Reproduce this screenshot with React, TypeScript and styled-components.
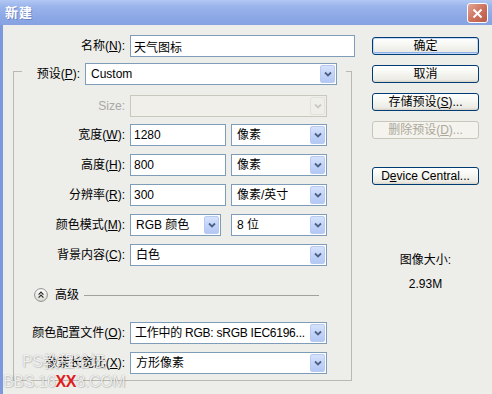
import React from "react";
import styled, { createGlobalStyle, css } from "styled-components";

const FONT = `"Liberation Sans", "Noto Sans CJK SC", sans-serif`;
const BG = "#EDEDEA";

const GlobalStyle = createGlobalStyle`
  html, body { margin: 0; padding: 0; background: ${BG}; }
  body { font-family: ${FONT}; font-size: 12px; color: #000; }
  * { box-sizing: border-box; }
`;

const Window = styled.div`
  position: relative;
  width: 492px;
  height: 394px;
  display: flex;
  flex-direction: column;
  background: #7D99DE;
  overflow: hidden;
`;

const TitleBar = styled.div`
  height: 25px;
  flex: none;
  display: flex;
  align-items: center;
  justify-content: space-between;
  padding: 0 4px 0 5px;
  background: linear-gradient(180deg, #B2C7F3 0%, #9BB5EC 25%, #8DA8E5 65%, #87A2E2 100%);
`;

const Title = styled.span`
  color: #fff;
  font-weight: bold;
  font-size: 13px;
  line-height: 16px;
  letter-spacing: 1px;
  text-shadow: 1px 1px 0 rgba(60, 80, 140, 0.4);
`;

const CloseButton = styled.div`
  width: 21px;
  height: 20px;
  margin-top: 1px;
  border: 1px solid #fff;
  border-radius: 3px;
  background: linear-gradient(135deg, #E3A595 0%, #CC6F5D 55%, #B95A48 100%);
  display: flex;
  align-items: center;
  justify-content: center;
`;

const Frame = styled.div`
  flex: 1;
  display: flex;
  margin-left: 3px;
  background: ${BG};
`;

const Main = styled.div`
  width: 352px;
  flex: none;
  display: flex;
  flex-direction: column;
  padding-top: 10px;
`;

const Row = styled.div<{ $mt?: number }>`
  display: flex;
  align-items: center;
  gap: 5px;
  height: 22px;
  flex: none;
  margin-top: ${(p) => p.$mt ?? 0}px;
`;

const Label = styled.label<{ $w: number; $disabled?: boolean }>`
  width: ${(p) => p.$w}px;
  flex: none;
  text-align: right;
  white-space: nowrap;
  line-height: 14px;
  color: ${(p) => (p.$disabled ? "#A9A8A2" : "#000")};
`;

const U = styled.span`
  text-decoration: underline;
`;

const TextBox = styled.input<{ $w: number }>`
  width: ${(p) => p.$w}px;
  height: 22px;
  flex: none;
  border: 1px solid #7F9DB9;
  background: #fff;
  padding: 0 3px;
  margin: 0;
  font-family: ${FONT};
  font-size: 12px;
  color: #000;
  outline: none;
`;

const Combo = styled.div<{ $w: number; $disabled?: boolean; $ml?: number }>`
  width: ${(p) => p.$w}px;
  height: 22px;
  flex: none;
  margin-left: ${(p) => p.$ml ?? 0}px;
  display: flex;
  align-items: stretch;
  border: 1px solid ${(p) => (p.$disabled ? "#C9C8BF" : "#7F9DB9")};
  background: ${(p) => (p.$disabled ? "#F0EFEA" : "#fff")};
`;

const ComboText = styled.span<{ $tight?: boolean }>`
  flex: 1;
  min-width: 0;
  padding-left: ${(p) => (p.$tight ? 4 : 5)}px;
  display: flex;
  align-items: center;
  white-space: nowrap;
  overflow: hidden;
  line-height: 14px;
  letter-spacing: ${(p) => (p.$tight ? "-0.25px" : "0")};
`;

const ArrowButton = styled.span<{ $disabled?: boolean }>`
  width: 15px;
  flex: none;
  margin: 1px;
  border-radius: 2px;
  display: flex;
  align-items: center;
  justify-content: center;
  ${(p) =>
    p.$disabled
      ? css`
          background: #EFEFEA;
          border: 1px solid #E2E1DA;
        `
      : css`
          background: linear-gradient(180deg, #D6E2FC 0%, #C3D4F9 50%, #B3C8F4 100%);
          border: 1px solid #B7CAF2;
        `}
`;

const GroupBox = styled.div`
  margin: 14px 0 0 10px;
  width: 339px;
  height: 310px;
  flex: none;
  border: 1px solid #B9B9B2;
  display: flex;
  flex-direction: column;
`;

const Legend = styled.div`
  margin: -9px 0 0 8px;
  width: 324px;
  height: 22px;
  flex: none;
  padding: 0 9px 0 4px;
  display: flex;
  align-items: center;
  gap: 5px;
  background: ${BG};
`;

const AdvancedRow = styled.div`
  margin: 22px 32px 0 0;
  padding-left: 20px;
  height: 14px;
  flex: none;
  display: flex;
  align-items: center;
`;

const AdvancedText = styled.span`
  margin: 0 5px 0 7px;
  line-height: 14px;
`;

const Rule = styled.div`
  flex: 1;
  height: 1px;
  background: #A2A29C;
`;

const Side = styled.div`
  margin-left: 17px;
  width: 107px;
  flex: none;
  display: flex;
  flex-direction: column;
  padding-top: 12px;
`;

const Button = styled.button<{ $primary?: boolean; $mt?: number }>`
  height: 18px;
  width: 100%;
  flex: none;
  margin: ${(p) => p.$mt ?? 0}px 0 0 0;
  padding: 0;
  font-family: ${FONT};
  font-size: 12px;
  line-height: 14px;
  color: #000;
  border: 1px solid #003C74;
  border-radius: 3px;
  background: linear-gradient(180deg, #FFFFFF 0%, #F7F7F3 40%, #ECEBE5 85%, #D8D3C8 100%);
  ${(p) =>
    p.$primary &&
    css`
      box-shadow: inset 0 0 0 1px #C4D8F8, inset 0 -1px 0 1px #8FB1E6;
    `}
  &:disabled {
    border-color: #C9C7BA;
    color: #ACA899;
    background: #F4F3EE;
  }
`;

const Info = styled.div<{ $mt: number }>`
  margin-top: ${(p) => p.$mt}px;
  text-align: center;
  line-height: 14px;
  white-space: nowrap;
`;

const Watermark = styled.div`
  position: absolute;
  left: 3px;
  top: 352px;
  display: flex;
  flex-direction: column;
  pointer-events: none;
  color: rgba(255, 255, 255, 0.85);
  font-family: "Liberation Sans", "Noto Sans CJK SC", sans-serif;
  font-size: 16px;
  line-height: 20px;
  text-shadow: 0 0 1px rgba(0, 0, 0, 0.35), 1px 1px 1px rgba(0, 0, 0, 0.12);
`;

const MarkLine = styled.span<{ $indent?: number }>`
  padding-left: ${(p) => p.$indent ?? 0}px;
  white-space: nowrap;
  letter-spacing: -0.3px;
`;

const Red = styled.span`
  color: #E01C1C;
  font-weight: bold;
  text-shadow: none;
`;

const Chevron = ({ disabled }: { disabled?: boolean }) => (
  <svg width="8" height="6" viewBox="0 0 8 6">
    <polyline
      points="1,1.5 4,4.5 7,1.5"
      fill="none"
      stroke={disabled ? "#CBCAC2" : "#4D6185"}
      strokeWidth="1.8"
    />
  </svg>
);

const Select = ({
  w,
  ml,
  tight,
  children,
  disabled,
}: {
  w: number;
  ml?: number;
  tight?: boolean;
  children?: React.ReactNode;
  disabled?: boolean;
}) => (
  <Combo $w={w} $ml={ml} $disabled={disabled}>
    <ComboText $tight={tight}>{children}</ComboText>
    <ArrowButton $disabled={disabled}>
      <Chevron disabled={disabled} />
    </ArrowButton>
  </Combo>
);

const ExpandIcon = () => (
  <svg width="14" height="14" viewBox="0 0 14 14">
    <defs>
      <linearGradient id="exg" x1="0" y1="0" x2="0" y2="1">
        <stop offset="0" stopColor="#FFFFFF" />
        <stop offset="1" stopColor="#D9D9D2" />
      </linearGradient>
    </defs>
    <circle cx="7" cy="7" r="6.4" fill="url(#exg)" stroke="#8F8F8A" strokeWidth="1" />
    <polyline points="4.6,6.6 7,4.2 9.4,6.6" fill="none" stroke="#2A2A2A" strokeWidth="1.2" />
    <polyline points="4.6,9.6 7,7.2 9.4,9.6" fill="none" stroke="#2A2A2A" strokeWidth="1.2" />
  </svg>
);

export default function App() {
  return (
    <>
      <GlobalStyle />
      <Window>
        <TitleBar>
          <Title>新建</Title>
          <CloseButton>
            <svg width="11" height="11" viewBox="0 0 11 11">
              <path d="M1.5 1.5 L9.5 9.5 M9.5 1.5 L1.5 9.5" stroke="#fff" strokeWidth="2" />
            </svg>
          </CloseButton>
        </TitleBar>
        <Frame>
          <Main>
            <Row>
              <Label $w={122}>
                名称(<U>N</U>):
              </Label>
              <TextBox $w={225} readOnly value="天气图标" />
            </Row>
            <GroupBox>
              <Legend>
                <Label $w={54}>
                  预设(<U>P</U>):
                </Label>
                <Select w={252}>Custom</Select>
              </Legend>
              <Row $mt={10}>
                <Label $w={111} $disabled>
                  Size:
                </Label>
                <Select w={197} disabled />
              </Row>
              <Row $mt={7}>
                <Label $w={111}>
                  宽度(<U>W</U>):
                </Label>
                <TextBox $w={96} readOnly value="1280" />
                <Select w={96}>像素</Select>
              </Row>
              <Row $mt={8}>
                <Label $w={111}>
                  高度(<U>H</U>):
                </Label>
                <TextBox $w={96} readOnly value="800" />
                <Select w={96}>像素</Select>
              </Row>
              <Row $mt={8}>
                <Label $w={111}>
                  分辨率(<U>R</U>):
                </Label>
                <TextBox $w={96} readOnly value="300" />
                <Select w={96}>像素/英寸</Select>
              </Row>
              <Row $mt={8}>
                <Label $w={111}>
                  颜色模式(<U>M</U>):
                </Label>
                <Select w={91}>RGB 颜色</Select>
                <Select w={96} ml={5}>
                  8 位
                </Select>
              </Row>
              <Row $mt={8}>
                <Label $w={111}>
                  背景内容(<U>C</U>):
                </Label>
                <Select w={197}>白色</Select>
              </Row>
              <AdvancedRow>
                <ExpandIcon />
                <AdvancedText>高级</AdvancedText>
                <Rule />
              </AdvancedRow>
              <Row $mt={20}>
                <Label $w={111}>
                  颜色配置文件(<U>O</U>):
                </Label>
                <Select w={197} tight>
                  工作中的 RGB: sRGB IEC6196...
                </Select>
              </Row>
              <Row $mt={8}>
                <Label $w={111}>
                  像素长宽比(<U>X</U>):
                </Label>
                <Select w={197}>方形像素</Select>
              </Row>
            </GroupBox>
          </Main>
          <Side>
            <Button $primary>确定</Button>
            <Button $mt={10}>取消</Button>
            <Button $mt={10}>
              存储预设(<U>S</U>)...
            </Button>
            <Button $mt={10} disabled>
              删除预设(<U>D</U>)...
            </Button>
            <Button $mt={28}>
              D<U>e</U>vice Central...
            </Button>
            <Info $mt={68}>图像大小:</Info>
            <Info $mt={10}>2.93M</Info>
          </Side>
        </Frame>
        <Watermark>
          <MarkLine $indent={19}>PS教程论坛</MarkLine>
          <MarkLine>
            BBS.16<Red>XX</Red>8.COM
          </MarkLine>
        </Watermark>
      </Window>
    </>
  );
}
